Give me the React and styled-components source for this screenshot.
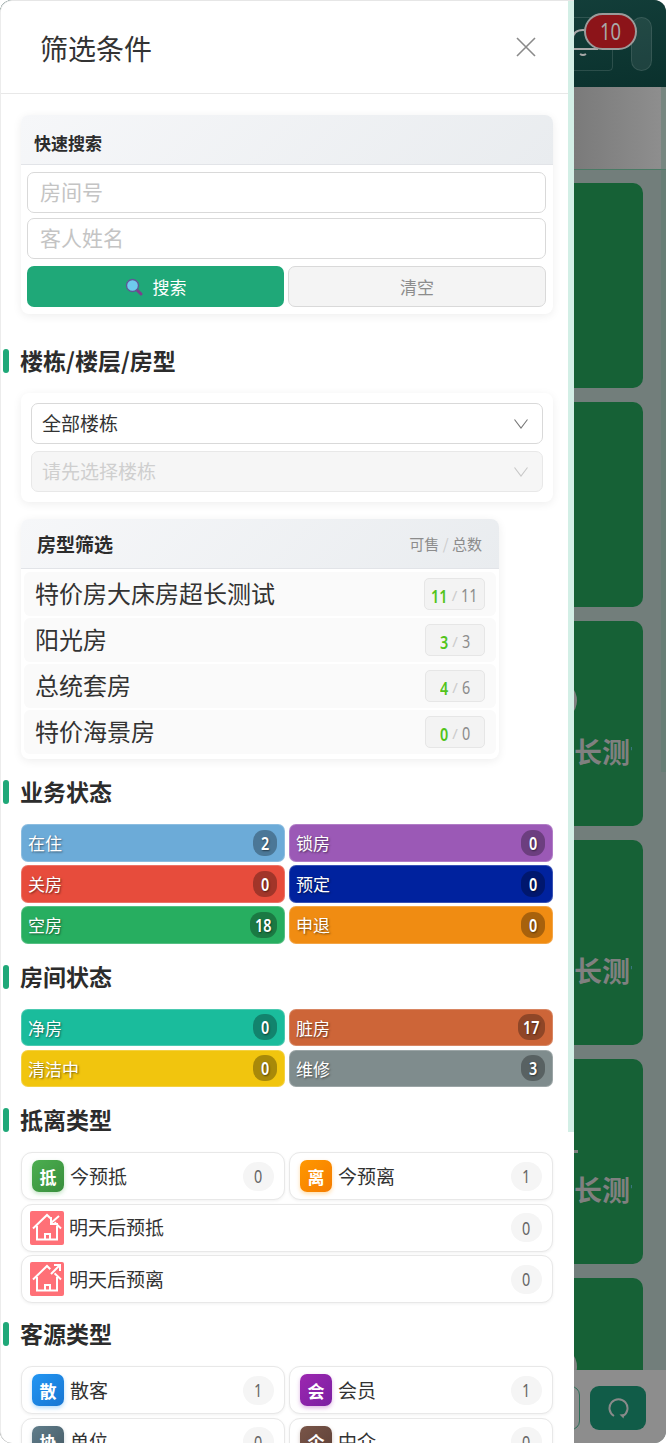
import React from 'react';
import styled, { createGlobalStyle } from 'styled-components';

const digits = '"Noto Sans", "Noto Sans CJK SC", sans-serif';

const GlobalStyle = createGlobalStyle`
  html, body {
    margin: 0;
    padding: 0;
    background: #fff;
  }
  body {
    width: 666px;
    height: 1443px;
    overflow: hidden;
    font-family: "Noto Sans CJK SC", "Noto Sans", sans-serif;
  }
  * {
    box-sizing: border-box;
  }
`;

const Page = styled.div`
  position: relative;
  width: 666px;
  height: 1443px;
  overflow: hidden;
`;

// the counters use a narrow numeral, no condensed face is installed
const NarrowNum = styled.span`
  display: inline-block;
  width: ${(p) => p.$chars * 0.46}em;
  font-family: ${digits};
  white-space: nowrap;
  transform: scaleX(0.8);
  transform-origin: left center;
`;

const Num = ({ value }) => <NarrowNum $chars={String(value).length}>{value}</NarrowNum>;

// the dimmed room board behind the drawer
const Backdrop = styled.div`
  height: 100%;
  display: flex;
  flex-direction: column;
  border-radius: 12px;
  overflow: hidden;
  background: #727e7b;
`;

const TopBar = styled.div`
  position: relative;
  flex: 0 0 87px;
  display: flex;
  justify-content: flex-end;
  align-items: center;
  gap: 18px;
  padding-right: 14px;
  background: linear-gradient(170deg, #1b4a45 0%, #0a312d 100%);
`;

const BellButton = styled.div`
  position: relative;
  width: 60px;
  height: 54px;
  display: flex;
  justify-content: center;
  border: 1px solid rgba(255, 255, 255, 0.13);
  border-radius: 4px;
`;

const CountBadge = styled.div`
  position: absolute;
  left: 30px;
  top: -5px;
  width: 53px;
  height: 37px;
  display: flex;
  align-items: center;
  justify-content: center;
  border: 2px solid #9a9a9a;
  border-radius: 19px;
  background: #8c1419;
  color: #a8a8a8;
  font-size: 23px;
`;

const MenuPill = styled.div`
  width: 21px;
  height: 54px;
  border: 1px solid rgba(255, 255, 255, 0.1);
  border-radius: 11px;
  background: rgba(255, 255, 255, 0.08);
`;

const SubBar = styled.div`
  flex: 0 0 83px;
  border-bottom: 1px solid #4a7a65;
  background: linear-gradient(90deg, #7a7a7a 86%, #8f8f8f 100%);
`;

const RoomGrid = styled.div`
  flex: 1;
  min-height: 0;
  display: flex;
  flex-direction: column;
  gap: 14px;
  padding: 13px 23px 0 0;
  overflow: hidden;
`;

const RoomCard = styled.div`
  position: relative;
  flex: 0 0 205px;
  display: flex;
  justify-content: flex-end;
  padding: 0 11px 0 0;
  border-radius: 10px;
  background: #166136;
`;

const RoomName = styled.div`
  width: 58px;
  margin-top: 111px;
  height: 38px;
  overflow: hidden;
  white-space: nowrap;
  color: #808080;
  font-size: 28px;
  font-weight: 700;
  line-height: 38px;
`;

// edge of the room icon that just shows past the drawer
const RoomMark = styled.div`
  position: absolute;
  left: ${(p) => p.$left}px;
  top: ${(p) => p.$top}px;
  width: ${(p) => p.$size}px;
  height: ${(p) => p.$height || p.$size}px;
  border-radius: ${(p) => (p.$height ? 0 : '50%')};
  background: #808080;
`;

const BottomBar = styled.div`
  flex: 0 0 73px;
  display: flex;
  justify-content: flex-end;
  gap: 10px;
  padding: 16px 20px 0 0;
  background: #8d8d8d;
`;

const OutlineButton = styled.div`
  width: 56px;
  height: 44px;
  border: 1px solid #2c6e58;
  border-radius: 9px;
`;

const RefreshButton = styled.div`
  width: 56px;
  height: 44px;
  display: flex;
  align-items: center;
  justify-content: center;
  border-radius: 9px;
  background: #115c48;
`;

const BoardThumb = styled.div`
  position: absolute;
  top: 87px;
  right: 0;
  width: 5px;
  height: 685px;
  background: rgba(90, 125, 110, 0.45);
`;

const Drawer = styled.aside`
  position: absolute;
  left: 0;
  top: 0;
  bottom: 0;
  width: 574px;
  overflow: hidden;
  border-top: 1px solid #e6e6e6;
  border-left: 1px solid #ececec;
  border-radius: 12px 0 0 12px;
  background: #fff;
`;

const DrawerThumb = styled.div`
  position: absolute;
  top: -1px;
  right: 0;
  width: 6px;
  height: 1132px;
  background: #d3efe6;
`;

const DrawerHead = styled.header`
  height: 93px;
  display: flex;
  align-items: center;
  justify-content: space-between;
  padding: 0 38px 0 39px;
  border-bottom: 1px solid #e8e8e8;
`;

const DrawerTitle = styled.h1`
  margin: 0;
  padding-top: 2px;
  color: #333;
  font-size: 28px;
  font-weight: 400;
`;

const DrawerBody = styled.div`
  padding: 21px 20px 0 20px;
`;

const Card = styled.section`
  width: ${(p) => p.$width || '532px'};
  margin-top: ${(p) => p.$top || 0}px;
  border-radius: 8px;
  overflow: hidden;
  background: #fff;
  box-shadow: 0 2px 10px rgba(0, 0, 0, 0.07);
`;

const CardHead = styled.div`
  height: 50px;
  display: flex;
  align-items: center;
  justify-content: space-between;
  padding: ${(p) => p.$drop || 0}px 17px 0 ${(p) => p.$left || 13}px;
  border-bottom: 1px solid #e2e4e8;
  background: linear-gradient(135deg, #f6f7f9 0%, #e9ecef 100%);
`;

const CardTitle = styled.div`
  color: #2c2c2c;
  font-size: ${(p) => p.$size || 17}px;
  font-weight: 700;
`;

const CardHint = styled.div`
  color: #8c8c8c;
  font-size: 15px;
  span {
    color: #ccc;
  }
`;

const SearchBody = styled.div`
  display: flex;
  flex-direction: column;
  gap: 5px;
  padding: 7px 7px 7px 6px;
`;

const TextInput = styled.div`
  height: 41px;
  display: flex;
  align-items: center;
  padding: 0 12px 3px;
  border: 1px solid #d9d9d9;
  border-radius: 7px;
  color: #c4c4c4;
  font-size: 21px;
`;

const ButtonRow = styled.div`
  display: grid;
  grid-template-columns: 257px 258px;
  gap: 4px;
  margin-top: 2px;
`;

const SearchButton = styled.div`
  height: 41px;
  display: flex;
  align-items: center;
  justify-content: center;
  gap: 10px;
  border-radius: 7px;
  background: #1fa878;
  color: #fff;
  font-size: 17px;
`;

const ClearButton = styled.div`
  height: 41px;
  display: flex;
  align-items: center;
  justify-content: center;
  border: 1px solid #d9d9d9;
  border-radius: 7px;
  background: #f4f4f4;
  color: #8c8c8c;
  font-size: 17px;
`;

const SectionTitle = styled.h2`
  height: 24px;
  display: flex;
  align-items: center;
  gap: 11px;
  margin: ${(p) => p.$top || 21}px 0 20px -18px;
  color: #2c2c2c;
  font-size: 23px;
  font-weight: 700;
  span {
    margin-top: -2px;
  }
  &::before {
    content: '';
    width: 6px;
    height: 24px;
    border-radius: 3px;
    background: #1fa878;
  }
`;

const SelectBody = styled.div`
  display: flex;
  flex-direction: column;
  gap: 7px;
  padding: 10px;
`;

const SelectBox = styled.div`
  height: 41px;
  display: flex;
  align-items: center;
  justify-content: space-between;
  padding: 0 14px 0 10px;
  border: 1px solid ${(p) => (p.$disabled ? '#e8e8e8' : '#d9d9d9')};
  border-radius: 7px;
  background: ${(p) => (p.$disabled ? '#f6f6f6' : '#fff')};
  color: ${(p) => (p.$disabled ? '#cfcfcf' : '#333')};
  font-size: 19px;
  span {
    margin-top: -2px;
  }
`;

const RoomTypeList = styled.div`
  display: flex;
  flex-direction: column;
  gap: 2px;
  padding: 3px 3px 5px;
`;

const RoomTypeRow = styled.div`
  height: 44px;
  display: flex;
  align-items: center;
  justify-content: space-between;
  padding: 0 11px 0 11px;
  border-radius: 6px;
  background: #fafafa;
  color: #333;
  font-size: 24px;
`;

const RoomTypeName = styled.span`
  margin-top: -4px;
`;

const StockBadge = styled.div`
  height: 32px;
  min-width: 60px;
  display: flex;
  align-items: center;
  justify-content: center;
  gap: 4px;
  padding: 1px 6px 0;
  border: 1px solid #e6e6e6;
  border-radius: 5px;
  background: #f3f3f3;
  color: #8c8c8c;
  font-size: 18px;
  b {
    color: #52c41a;
    font-weight: 600;
  }
  i {
    color: #ccc;
    font-family: ${digits};
    font-size: 15px;
    font-style: normal;
  }
`;

const ChipGrid = styled.div`
  display: grid;
  grid-template-columns: 264px 264px;
  grid-auto-rows: 37.6px;
  gap: 3.4px 4px;
  width: 532px;
`;

const StatusChip = styled.div`
  display: flex;
  align-items: center;
  justify-content: space-between;
  padding: 0 7px 0 6px;
  border: 1px solid rgba(255, 255, 255, 0.22);
  border-radius: 7px;
  background: ${(p) => p.$color};
  color: #fff;
  font-size: 17px;
  text-shadow: 1px 1px 2px rgba(0, 0, 0, 0.5);
`;

const ChipCount = styled.span`
  min-width: 24px;
  height: 26px;
  display: flex;
  align-items: center;
  justify-content: center;
  padding: 0 5px;
  border-radius: 11px;
  background: rgba(0, 0, 0, 0.3);
  font-size: 18px;
  font-weight: 600;
`;

const TypeGrid = styled.div`
  display: grid;
  grid-template-columns: 264px 264px;
  grid-auto-rows: 48px;
  gap: 3.6px 4px;
  width: 532px;
`;

const TypeCard = styled.div`
  grid-column: ${(p) => (p.$wide ? 'span 2' : 'auto')};
  display: flex;
  align-items: center;
  padding: 0 10px 0 ${(p) => (p.$house ? 8 : 10)}px;
  border: 1px solid #e8e8e8;
  border-radius: 11px;
  background: #fff;
  box-shadow: 0 1px 3px rgba(0, 0, 0, 0.06);
`;

const TypeIcon = styled.span`
  flex: 0 0 32px;
  height: 32px;
  display: flex;
  align-items: center;
  justify-content: center;
  border-radius: 7px;
  background: linear-gradient(135deg, ${(p) => p.$from}, ${(p) => p.$to});
  box-shadow: 0 2px 4px ${(p) => p.$from}55;
  color: #fff;
  font-size: 17px;
  font-weight: 700;
`;

const HouseIcon = styled.svg`
  flex: 0 0 34px;
  height: 34px;
`;

const TypeLabel = styled.span`
  flex: 1;
  margin: -2px 0 0 ${(p) => (p.$house ? 5 : 6)}px;
  color: #333;
  font-size: 19px;
`;

const TypeCount = styled.span`
  width: 31px;
  height: 29px;
  display: flex;
  align-items: center;
  justify-content: center;
  border-radius: 15px;
  background: #f5f5f5;
  color: #666;
  font-size: 18px;
`;

const SearchGlyph = () => (
  <svg width="18" height="18" viewBox="0 0 18 18">
    <line x1="11" y1="11" x2="16" y2="16" stroke="#7d3f8c" strokeWidth="3" strokeLinecap="round" />
    <circle cx="7.5" cy="7.5" r="6" fill="#6ecbee" stroke="#5d5a96" strokeWidth="1.4" />
  </svg>
);

const Chevron = ({ color }) => (
  <svg width="14" height="10" viewBox="0 0 14 10">
    <polyline points="0.5,0.5 7,9 13.5,0.5" fill="none" stroke={color} strokeWidth="1.1" />
  </svg>
);

const CloseGlyph = () => (
  <svg width="20" height="20" viewBox="0 0 20 20">
    <path d="M1 1 L19 19 M19 1 L1 19" stroke="#8a8a8a" strokeWidth="1.6" />
  </svg>
);

const BellGlyph = () => (
  <svg width="30" height="28" viewBox="0 0 30 28" style={{ marginTop: 11 }}>
    <path
      d="M1 20 C4 18 5 15 5 10 C5 4 9 1 15 1 C21 1 25 4 25 10 C25 15 26 18 29 20 Z"
      fill="none"
      stroke="#a8a8a8"
      strokeWidth="2"
    />
    <path d="M12 25 Q15 27 18 25" fill="none" stroke="#a8a8a8" strokeWidth="2" />
  </svg>
);

const RefreshGlyph = () => (
  <svg width="22" height="24" viewBox="0 0 22 24">
    <path d="M7 20 A9 9 0 1 1 16 20" fill="none" stroke="#8a8a8a" strokeWidth="2" />
    <path d="M12.5 18.5 L17.5 18 L16.5 22.5 Z" fill="#8a8a8a" />
  </svg>
);

const House = ({ leave }) => (
  <HouseIcon viewBox="0 0 34 34">
    <rect width="34" height="34" rx="2" fill="#ff7077" />
    <g fill="none" stroke="#fff" strokeWidth="2">
      <polyline points="3,17.5 17,4 31,17.5" />
      <path d="M7 15 V28.5 H27 V15" />
      <path d="M15 28.5 V23 H20 V28.5" />
      <path d="M29 2 L19 13" stroke="#ff7077" strokeWidth="6" />
      {leave ? <path d="M21 12 L29 4 M24 3 H30 V9" /> : <path d="M29 5 L21 12 M21 6 V13 H28" />}
    </g>
  </HouseIcon>
);

const roomTypes = [
  { name: '特价房大床房超长测试', free: 11, total: 11 },
  { name: '阳光房', free: 3, total: 3 },
  { name: '总统套房', free: 4, total: 6 },
  { name: '特价海景房', free: 0, total: 0 },
];

const bizStatus = [
  ['在住', 2, '#6cabd8'],
  ['锁房', 0, '#9b59b6'],
  ['关房', 0, '#e74c3c'],
  ['预定', 0, '#00229e'],
  ['空房', 18, '#27ae60'],
  ['申退', 0, '#f08c12'],
];

const roomStatus = [
  ['净房', 0, '#1abc9c'],
  ['脏房', 17, '#cd6538'],
  ['清洁中', 0, '#f1c50e'],
  ['维修', 3, '#7f8c8d'],
];

const sources = [
  ['散', '散客', 1, '#2196f3', '#1976d2'],
  ['会', '会员', 1, '#9c27b0', '#7b1fa2'],
  ['协', '单位', 0, '#607d8b', '#455a64'],
  ['企', '中介', 0, '#795548', '#5d4037'],
];

const Chips = ({ items }) => (
  <ChipGrid>
    {items.map(([label, count, color]) => (
      <StatusChip key={label} $color={color}>
        {label}
        <ChipCount><Num value={count} /></ChipCount>
      </StatusChip>
    ))}
  </ChipGrid>
);

const TypeItem = ({ mark, label, count, from, to }) => (
  <TypeCard>
    <TypeIcon $from={from} $to={to}>{mark}</TypeIcon>
    <TypeLabel>{label}</TypeLabel>
    <TypeCount><Num value={count} /></TypeCount>
  </TypeCard>
);

const HouseItem = ({ label, count, leave }) => (
  <TypeCard $wide $house>
    <House leave={leave} />
    <TypeLabel $house>{label}</TypeLabel>
    <TypeCount><Num value={count} /></TypeCount>
  </TypeCard>
);

export default function App() {
  return (
    <Page>
      <GlobalStyle />
      <Backdrop>
        <TopBar>
          <BellButton>
            <BellGlyph />
            <CountBadge><Num value={10} /></CountBadge>
          </BellButton>
          <MenuPill />
        </TopBar>
        <SubBar />
        <RoomGrid>
          {[0, 1, 2, 3, 4, 5].map((i) => (
            <RoomCard key={i}>
              {i === 2 && <RoomMark $left={536} $top={59} $size={41} />}
              {i === 4 && <RoomMark $left={570} $top={91} $size={8} $height={3} />}
              {i === 5 && <RoomMark $left={536} $top={68} $size={41} />}
              {i >= 2 && i <= 4 && <RoomName>长测试</RoomName>}
            </RoomCard>
          ))}
        </RoomGrid>
        <BottomBar>
          <OutlineButton />
          <RefreshButton>
            <RefreshGlyph />
          </RefreshButton>
        </BottomBar>
      </Backdrop>
      <BoardThumb />

      <Drawer>
        <DrawerThumb />
        <DrawerHead>
          <DrawerTitle>筛选条件</DrawerTitle>
          <CloseGlyph />
        </DrawerHead>
        <DrawerBody>
          <Card>
            <CardHead $drop={5}>
              <CardTitle>快速搜索</CardTitle>
            </CardHead>
            <SearchBody>
              <TextInput>房间号</TextInput>
              <TextInput>客人姓名</TextInput>
              <ButtonRow>
                <SearchButton>
                  <SearchGlyph />
                  搜索
                </SearchButton>
                <ClearButton>清空</ClearButton>
              </ButtonRow>
            </SearchBody>
          </Card>

          <SectionTitle $top={35}><span>楼栋/楼层/房型</span></SectionTitle>
          <Card>
            <SelectBody>
              <SelectBox>
                <span>全部楼栋</span>
                <Chevron color="#777" />
              </SelectBox>
              <SelectBox $disabled>
                <span>请先选择楼栋</span>
                <Chevron color="#c8c8c8" />
              </SelectBox>
            </SelectBody>
          </Card>

          <Card $width="478px" $top={17}>
            <CardHead $left={16}>
              <CardTitle $size={19}>房型筛选</CardTitle>
              <CardHint>
                可售 <span>/</span> 总数
              </CardHint>
            </CardHead>
            <RoomTypeList>
              {roomTypes.map((room) => (
                <RoomTypeRow key={room.name}>
                  <RoomTypeName>{room.name}</RoomTypeName>
                  <StockBadge>
                    <b><Num value={room.free} /></b>
                    <i>/</i>
                    <Num value={room.total} />
                  </StockBadge>
                </RoomTypeRow>
              ))}
            </RoomTypeList>
          </Card>

          <SectionTitle><span>业务状态</span></SectionTitle>
          <Chips items={bizStatus} />

          <SectionTitle><span>房间状态</span></SectionTitle>
          <Chips items={roomStatus} />

          <SectionTitle><span>抵离类型</span></SectionTitle>
          <TypeGrid>
            <TypeItem mark="抵" label="今预抵" count={0} from="#4caf50" to="#388e3c" />
            <TypeItem mark="离" label="今预离" count={1} from="#ff9800" to="#f57c00" />
            <HouseItem label="明天后预抵" count={0} />
            <HouseItem label="明天后预离" count={0} leave />
          </TypeGrid>

          <SectionTitle $top={19}><span>客源类型</span></SectionTitle>
          <TypeGrid>
            {sources.map(([mark, label, count, from, to]) => (
              <TypeItem key={label} mark={mark} label={label} count={count} from={from} to={to} />
            ))}
          </TypeGrid>
        </DrawerBody>
      </Drawer>
    </Page>
  );
}
